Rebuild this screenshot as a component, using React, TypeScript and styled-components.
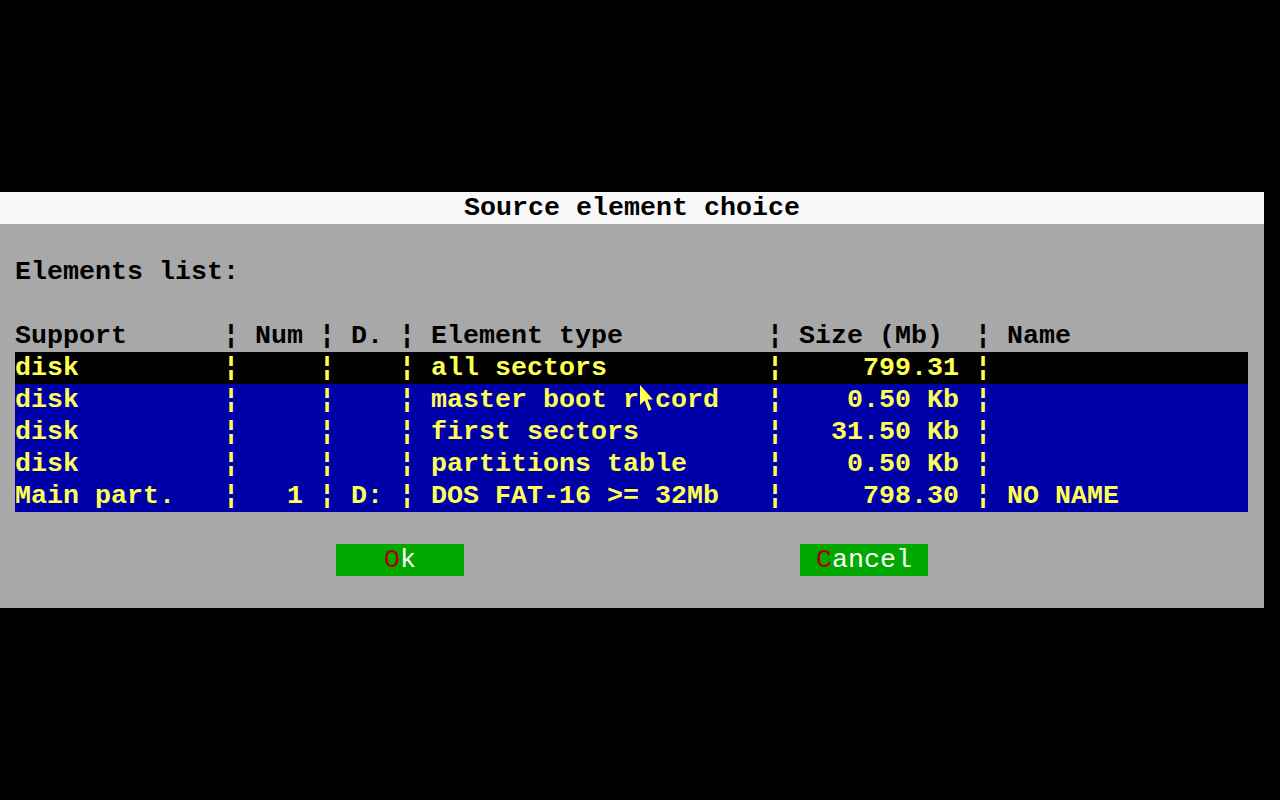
import React from "react";
import styled, { createGlobalStyle } from "styled-components";

// text mode grid: 80x25 cells of 16x32 px
const CELL = 16;
const LINE = 32;

const GlobalStyle = createGlobalStyle`
  html, body {
    margin: 0;
    padding: 0;
    background: #000;
  }
`;

type Row = {
  support: string;
  num: string;
  drive: string;
  type: React.ReactNode;
  size: string;
  name: string;
  selected?: boolean;
};

const rows: Row[] = [
  { support: "disk", num: "", drive: "", type: "all sectors", size: "799.31", name: "", selected: true },
  {
    support: "disk",
    num: "",
    drive: "",
    type: (
      <>
        master boot r
        <Pointer />
        cord
      </>
    ),
    size: "0.50 Kb",
    name: "",
  },
  { support: "disk", num: "", drive: "", type: "first sectors", size: "31.50 Kb", name: "" },
  { support: "disk", num: "", drive: "", type: "partitions table", size: "0.50 Kb", name: "" },
  { support: "Main part.", num: "1", drive: "D:", type: "DOS FAT-16 >= 32Mb", size: "798.30", name: "NO NAME" },
];

function Pointer() {
  return (
    <CursorCell>
      <svg width="16" height="32" viewBox="0 0 16 32">
        <path d="M1 1 L1 21 L5.5 16.5 L9.5 27 L12.5 25.5 L8.5 15.5 L14 15.5 Z" fill="#ffff55" />
      </svg>
    </CursorCell>
  );
}

const App = () => {
  return (
    <Screen>
      <GlobalStyle />
      <Dialog>
        <TitleBar>Source element choice</TitleBar>
        <Body>
          <Line />
          <Line>Elements list:</Line>
          <Line />
          <TableRow $head>
            <Cell $w={13}>Support</Cell>
            <Sep>¦</Sep>
            <Cell $w={5} $right>Num</Cell>
            <Sep>¦</Sep>
            <Cell $w={4} $pad>D.</Cell>
            <Sep>¦</Sep>
            <Cell $w={22} $pad>Element type</Cell>
            <Sep>¦</Sep>
            <Cell $w={12} $pad>Size (Mb)</Cell>
            <Sep>¦</Sep>
            <Cell $w={16} $pad>Name</Cell>
          </TableRow>
          <Table>
            {rows.map((r, i) => (
              <TableRow key={i} $selected={r.selected}>
                <Cell $w={13}>{r.support}</Cell>
                <Sep>¦</Sep>
                <Cell $w={5} $right>{r.num}</Cell>
                <Sep>¦</Sep>
                <Cell $w={4} $pad>{r.drive}</Cell>
                <Sep>¦</Sep>
                <Cell $w={22} $pad>{r.type}</Cell>
                <Sep>¦</Sep>
                <Cell $w={12} $right>{r.size}</Cell>
                <Sep>¦</Sep>
                <Cell $w={16} $pad>{r.name}</Cell>
              </TableRow>
            ))}
          </Table>
          <Line />
          <ButtonRow>
            <Button>
              <Hot>O</Hot>k
            </Button>
            <Button>
              <Hot>C</Hot>ancel
            </Button>
          </ButtonRow>
          <Line />
        </Body>
      </Dialog>
    </Screen>
  );
};

export default App;

const Screen = styled.div`
  width: 1280px;
  height: 800px;
  background: #000;
  padding-top: ${LINE * 6}px;
  box-sizing: border-box;
  overflow: hidden;
  font-family: "Liberation Mono", "DejaVu Sans Mono", monospace;
  font-size: 26.667px;
  font-weight: 700;
  line-height: ${LINE}px;
  white-space: pre;
`;

const Dialog = styled.div`
  width: ${CELL * 79}px;
  display: flex;
  flex-direction: column;
`;

const TitleBar = styled.div`
  height: ${LINE}px;
  background: #f8f8f8;
  color: #000;
  text-align: center;
`;

const Body = styled.div`
  background: #a8a8a8;
  color: #000;
  padding-left: 15px;
  display: flex;
  flex-direction: column;
`;

const Line = styled.div`
  height: ${LINE}px;
`;

const Table = styled.div`
  display: flex;
  flex-direction: column;
  width: ${CELL * 77 + 1}px;
  background: #0000a8;
  color: #ffff55;
`;

const TableRow = styled.div<{ $head?: boolean; $selected?: boolean }>`
  display: flex;
  height: ${LINE}px;
  width: ${CELL * 77 + 1}px;
  background: ${(p) => (p.$selected ? "#000" : "transparent")};
  color: ${(p) => (p.$head ? "#000" : "#ffff55")};
`;

const Cell = styled.div<{ $w: number; $right?: boolean; $pad?: boolean }>`
  width: ${(p) => p.$w * CELL}px;
  flex: none;
  overflow: hidden;
  padding-left: ${(p) => (p.$pad ? CELL : 0)}px;
  padding-right: ${(p) => (p.$right ? CELL : 0)}px;
  box-sizing: border-box;
  display: flex;
  justify-content: ${(p) => (p.$right ? "flex-end" : "flex-start")};
`;

const Sep = styled.div`
  width: ${CELL}px;
  flex: none;
  text-align: center;
`;

const CursorCell = styled.span`
  display: inline-block;
  width: ${CELL}px;
  height: ${LINE}px;
  svg {
    display: block;
  }
`;

const ButtonRow = styled.div`
  height: ${LINE}px;
  display: flex;
  gap: ${CELL * 21}px;
  padding-left: ${CELL * 21 - 15}px;
`;

const Button = styled.div`
  width: ${CELL * 8}px;
  height: ${LINE}px;
  background: #00a800;
  color: #fcfcfc;
  font-weight: 400;
  text-align: center;
`;

const Hot = styled.span`
  color: #a80000;
`;
